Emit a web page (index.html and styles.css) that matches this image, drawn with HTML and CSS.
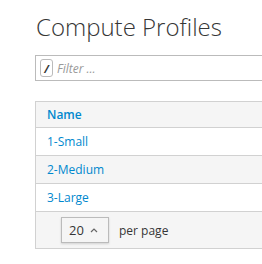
FILE: index.html
```html
<!DOCTYPE html>
<html lang="en">
<head>
    <meta charset="UTF-8">
    <title>Compute Profiles</title>
    <link rel="stylesheet" href="styles.css">
</head>
<body>
    <div class="page">
        <h1>Compute Profiles</h1>
        <div class="search">
            <span class="key">/</span>
            <input type="text" placeholder="Filter ...">
        </div>
        <table class="list">
            <thead>
                <tr><th>Name</th></tr>
            </thead>
            <tbody>
                <tr><td><a href="#">1-Small</a></td></tr>
                <tr class="odd"><td><a href="#">2-Medium</a></td></tr>
                <tr><td><a href="#">3-Large</a></td></tr>
            </tbody>
        </table>
        <div class="pager">
            <div class="per-page">
                <span>20</span>
                <svg width="8" height="5" viewBox="0 0 8 5"><path d="M1 4 L4 1 L7 4" fill="none" stroke="#666" stroke-width="1.2"/></svg>
            </div>
            <span class="label">per page</span>
        </div>
    </div>
</body>
</html>
```

FILE: styles.css
```css
body {
    margin: 0;
    font-family: "Open Sans", sans-serif;
    font-size: 12px;
    color: #363636;
    background: #fff;
}
.page {
    padding-left: 35px;
}
h1 {
    font-size: 24px;
    font-weight: 300;
    line-height: 26px;
    margin: 14px 0 15px 1px;
    color: #363636;
}
.search {
    display: flex;
    align-items: center;
    height: 24px;
    border: 1px solid #bbb;
    border-right: none;
    padding-left: 4px;
}
.key {
    display: inline-flex;
    justify-content: center;
    align-items: center;
    width: 11px;
    height: 16px;
    border: 1px solid #bbb;
    border-radius: 3px;
    font-style: italic;
    font-weight: 700;
    font-size: 11px;
    color: #363636;
}
.search input {
    border: none;
    outline: none;
    font-family: inherit;
    font-size: 12px;
    font-style: italic;
    padding: 0 0 0 4px;
    color: #363636;
    min-width: 0;
    flex: 1;
}
.search input::placeholder {
    color: #999;
}
.list {
    margin-top: 20px;
    width: 100%;
    border-collapse: collapse;
    border: 1px solid #d1d1d1;
    border-right: none;
}
.list th, .list td {
    text-align: left;
    padding: 0 11px;
    border-bottom: 1px solid #d1d1d1;
}
.list th {
    height: 25px;
    background: #f5f5f5;
    color: #0088ce;
    font-weight: 600;
    border-top: 1px solid #d1d1d1;
}
.list td {
    height: 27px;
}
.list tr.odd td {
    background: #f5f5f5;
}
.list a {
    color: #0088ce;
    text-decoration: none;
}
.pager {
    display: flex;
    align-items: center;
    height: 36px;
    background: #f5f5f5;
    border: 1px solid #d1d1d1;
    border-top: none;
    border-right: none;
    padding-left: 25px;
}
.per-page {
    display: flex;
    align-items: center;
    justify-content: space-between;
    box-sizing: border-box;
    width: 48px;
    height: 26px;
    padding: 0 10px 0 7px;
    border: 1px solid #bbb;
    background: #f5f5f5;
    box-shadow: 0 1px 2px rgba(0,0,0,0.15);
    font-size: 13px;
}
.label {
    margin-left: 10px;
    font-size: 12px;
}
```
